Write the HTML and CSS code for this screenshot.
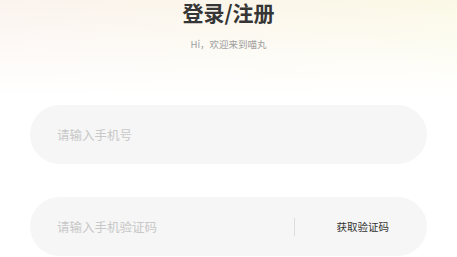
FILE: index.html
```html
<!DOCTYPE html>
<html lang="zh-CN">
<head>
<meta charset="utf-8">
<link rel="stylesheet" href="styles.css">
</head>
<body>
<div class="page">
  <header class="head">
    <h1 class="title">登录/注册</h1>
    <p class="sub">Hi，欢迎来到喵丸</p>
  </header>
  <form class="form">
    <div class="field">
      <input class="input" type="text" placeholder="请输入手机号">
    </div>
    <div class="field">
      <input class="input" type="text" placeholder="请输入手机验证码">
      <span class="divider"></span>
      <button class="code" type="button">获取验证码</button>
    </div>
  </form>
</div>
</body>
</html>
```
FILE: styles.css
```css
html, body {
  margin: 0;
  padding: 0;
  background: #fff;
}
.page {
  width: 457px;
  height: 257px;
  overflow: hidden;
  font-family: "Noto Sans CJK SC", "Noto Sans", sans-serif;
  background:
    linear-gradient(to bottom, rgba(255,255,255,0) 0, #fff 95px),
    linear-gradient(to right, #fbf3ee, #fbf9e6);
}
.head {
  display: flex;
  flex-direction: column;
  align-items: center;
}
.title {
  margin: 0;
  font-size: 21px;
  line-height: 25px;
  font-weight: 700;
  color: #363636;
}
.sub {
  margin: 12px 0 0;
  font-size: 9.5px;
  line-height: 14px;
  color: #a0a0a0;
}
.form {
  display: flex;
  flex-direction: column;
  gap: 33px;
  margin: 54px 30px 0;
}
.field {
  display: flex;
  align-items: center;
  height: 59px;
  border-radius: 30px;
  background: #f6f6f6;
  padding: 0 27px;
}
.input {
  flex: 1;
  min-width: 0;
  border: 0;
  outline: none;
  background: transparent;
  font-family: inherit;
  font-size: 12.5px;
  color: #333;
  padding: 0;
}
.input::placeholder {
  color: #c8c8c8;
}
.divider {
  width: 1px;
  height: 18px;
  background: #ddd;
}
.code {
  border: 0;
  background: transparent;
  font-family: inherit;
  font-size: 10.5px;
  color: #333;
  padding: 0 11px 0 42px;
}
```
